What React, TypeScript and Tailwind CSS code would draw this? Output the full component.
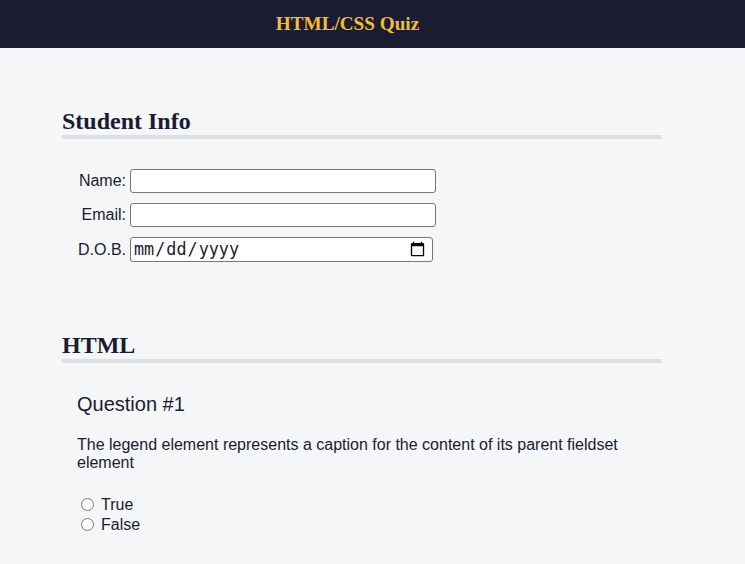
import React from 'react';

const serif = "font-['Liberation_Serif','Times_New_Roman',serif]";

const InfoRow: React.FC<{ label: string; children: React.ReactNode }> = ({ label, children }) => (
  <div className="flex items-center pl-[9px]">
    <label className="w-[55px] text-right whitespace-nowrap">{label}</label>
    <div className="ml-[4px] flex">{children}</div>
  </div>
);

export default function App() {
  return (
    <div className="min-h-screen bg-[#f5f6f7] text-[#1b1b32] font-['Liberation_Sans',Arial,sans-serif] text-[16px]">
      <header className="h-[48px] bg-[#1b1b32] flex items-center justify-center pr-[50px]">
        <h1 className={`${serif} font-bold text-[19.2px] text-[#f1be32]`}>HTML/CSS Quiz</h1>
      </header>

      <main className="pl-[62px]">
        <section className="w-[600px]">
          <h2 className={`${serif} font-bold text-[24px] leading-[27px] pt-[60px] border-b-4 border-[#dfdfe2]`}>
            Student Info
          </h2>
          <div className="pt-[30px] flex flex-col gap-[10px]">
            <InfoRow label="Name:">
              <input type="text" className="w-[306px] h-[24px] bg-white border border-[#767676] rounded-[3px] px-[2px]" />
            </InfoRow>
            <InfoRow label="Email:">
              <input type="email" className="w-[306px] h-[24px] bg-white border border-[#767676] rounded-[3px] px-[2px]" />
            </InfoRow>
            <InfoRow label="D.O.B.">
              <input
                type="date"
                className="w-[303px] h-[25px] bg-white border border-[#767676] rounded-[3px] pl-[2px] pr-[4px] font-['DejaVu_Sans_Mono',monospace] text-[16.8px] text-[#1b1b32]"
              />
            </InfoRow>
          </div>
        </section>

        <section className="w-[600px] mt-[10px]">
          <h2 className={`${serif} font-bold text-[24px] leading-[27px] pt-[60px] border-b-4 border-[#dfdfe2]`}>
            HTML
          </h2>
          <div className="pt-[30px]">
            <h3 className="pl-[15px] text-[20px] leading-[23px] font-normal">Question #1</h3>
            <p className="pl-[15px] mt-[20px] leading-[18.4px]">
              The legend element represents a caption for the content of its parent fieldset element
            </p>
            <ul className="mt-[22px] pl-[14px]">
              <li className="h-[20px] flex items-center">
                <label className="flex items-center">
                  <input type="radio" name="q1" value="true" className="w-[13px] h-[13px] ml-[5px] mr-[7px]" />
                  True
                </label>
              </li>
              <li className="h-[20px] flex items-center">
                <label className="flex items-center">
                  <input type="radio" name="q1" value="false" className="w-[13px] h-[13px] ml-[5px] mr-[7px]" />
                  False
                </label>
              </li>
            </ul>
          </div>
        </section>
      </main>
    </div>
  );
}
